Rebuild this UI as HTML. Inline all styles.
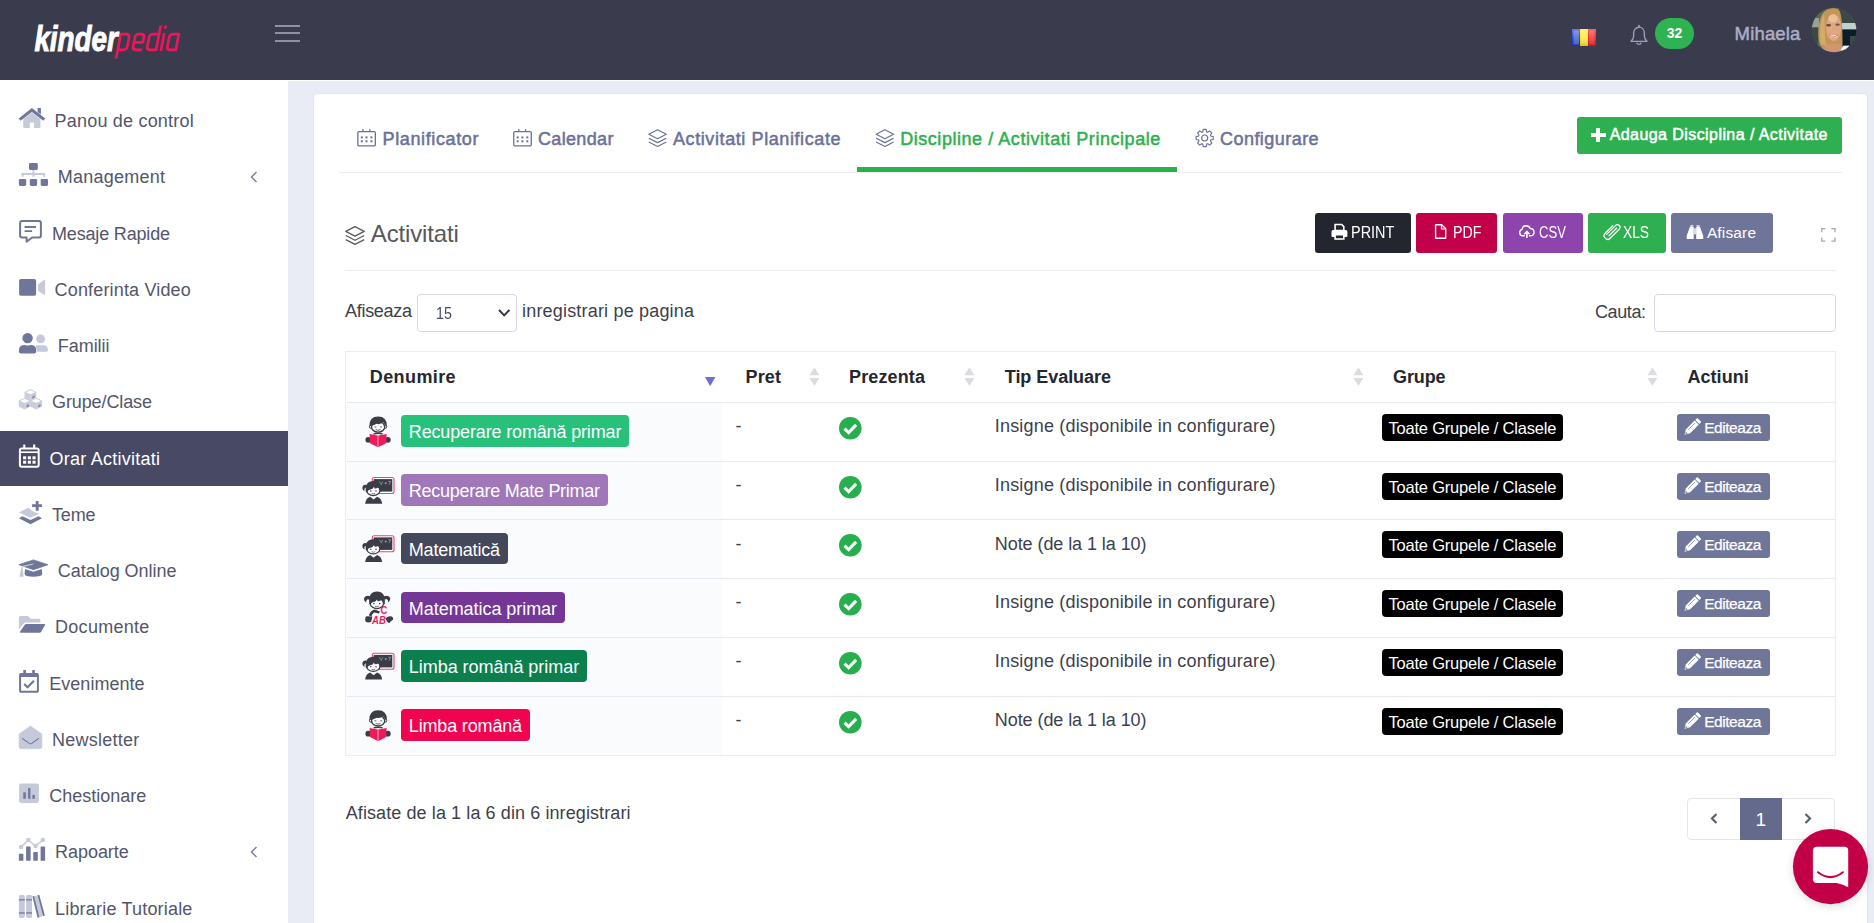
<!DOCTYPE html>
<html lang="ro">
<head>
<meta charset="utf-8">
<title>Kinderpedia - Orar Activitati</title>
<style>
*{box-sizing:border-box;margin:0;padding:0}
html,body{width:1874px;height:923px;overflow:hidden}
body{position:relative;background:#e9ecf5;font-family:"Liberation Sans",sans-serif;color:#3f4254;font-size:18px}
.abs{position:absolute}
.t{position:absolute;white-space:pre;line-height:1}
svg{position:absolute;overflow:visible}
</style>
</head>
<body>
<div class="abs" style="left:0px;top:0px;width:1874px;height:80px;background:#3a3c4e;border-radius:0px;"></div>
<svg style="left:0;top:0" width="200" height="80" viewBox="0 0 200 80"><g transform="translate(0 50.9) skewX(-10.8)"><path d="M117.6 7.6 V-17.8 M117.6 -16.7 H123.3 Q126.5 -16.7 126.5 -13.5 V-4.300000000000001 Q126.5 -1.1 123.3 -1.1 H117.6 M132.3 -8.6 H141.3 V-13.5 Q141.3 -16.7 138.10000000000002 -16.7 H135.5 Q132.3 -16.7 132.3 -13.5 V-4.300000000000001 Q132.3 -1.1 135.5 -1.1 H141.9 M155.9 0 V-25.4 M155.9 -16.7 H149.7 Q146.5 -16.7 146.5 -13.5 V-4.300000000000001 Q146.5 -1.1 149.7 -1.1 H155.9 M160.9 0 V-17.8 M160.9 -22.2 V-25.4 M175.6 0 V-17.8 M175.6 -16.7 H169.79999999999998 Q166.6 -16.7 166.6 -13.5 V-4.300000000000001 Q166.6 -1.1 169.79999999999998 -1.1 H175.6" fill="none" stroke="#ee1659" stroke-width="2.7" stroke-linejoin="round"/></g><text x="34.4" y="50.8" font-family="Liberation Sans,sans-serif" font-weight="bold" font-style="italic" font-size="35" fill="#fff" stroke="#fff" stroke-width="1.0" textLength="83.5" lengthAdjust="spacingAndGlyphs">kinder</text></svg>
<div class="abs" style="left:275px;top:25.1px;width:25px;height:2.1px;background:#8e92a3;border-radius:0px;"></div>
<div class="abs" style="left:275px;top:32.4px;width:25px;height:2.1px;background:#8e92a3;border-radius:0px;"></div>
<div class="abs" style="left:275px;top:39.8px;width:25px;height:2.1px;background:#8e92a3;border-radius:0px;"></div>
<svg style="left:1572px;top:28.8px" width="24" height="17" viewBox="0 0 24 17" ><defs><linearGradient id="fg" x1="0" y1="0" x2="0" y2="1"><stop offset="0" stop-color="#fff" stop-opacity=".35"/><stop offset=".5" stop-color="#fff" stop-opacity=".12"/><stop offset="1" stop-color="#000" stop-opacity=".12"/></linearGradient></defs><rect x="0" y="0" width="8" height="17" fill="#1a34c4"/><rect x="8" y="0" width="8" height="17" fill="#fbe316"/><rect x="16" y="0" width="8" height="17" fill="#e8141c"/><rect x="1.5" y="1.5" width="5.5" height="14" fill="#5d7fe0" opacity=".75"/><rect x="9" y="1.5" width="6" height="14" fill="#fff45c" opacity=".6"/><rect x="17" y="1.5" width="5.5" height="14" fill="#ff5a5a" opacity=".55"/><rect x="0" y="0" width="24" height="17" fill="url(#fg)"/></svg>
<svg style="left:1629.5px;top:24.6px" width="18" height="21" viewBox="0 0 18 21" ><path d="M9 2.2 C5.6 2.2 3.6 5 3.6 8.6 V11.6 C3.6 13.8 2.2 15 1 16.4 H17 C15.8 15 14.4 13.8 14.4 11.6 V8.6 C14.4 5 12.4 2.2 9 2.2 Z" fill="none" stroke="#9c9fb8" stroke-width="1.35" stroke-linejoin="round"/><path d="M9 0.6 V2.2" stroke="#9c9fb8" stroke-width="1.6" stroke-linecap="round"/><path d="M6.7 17.6 A2.4 2.4 0 0 0 11.3 17.6" fill="none" stroke="#9c9fb8" stroke-width="1.35"/></svg>
<div class="abs" style="left:1655px;top:18px;width:39px;height:31px;background:#2fb352;border-radius:15.5px;"></div>
<div class="t" style="left:1666.7px;top:25.9px;font-size:14px;font-weight:bold;letter-spacing:0.022px;color:#fff;">32</div>
<div class="t" style="left:1734.6px;top:24.5px;font-size:18.5px;-webkit-text-stroke:0.5px;letter-spacing:0.167px;color:#abaec6;">Mihaela</div>
<svg style="left:1804px;top:0px" width="60" height="60" viewBox="0 0 60 60" ><defs><clipPath id="avc"><circle cx="30.05" cy="29.95" r="22.3"/></clipPath><filter id="avb" x="-20%" y="-20%" width="140%" height="140%"><feGaussianBlur stdDeviation="0.65"/></filter></defs><g clip-path="url(#avc)"><g filter="url(#avb)"><rect x="0" y="0" width="60" height="60" fill="#5d665c"/><rect x="5" y="18" width="10" height="9" fill="#9aa392"/><rect x="5" y="28" width="9" height="16" fill="#3a4a46"/><rect x="35" y="5" width="25" height="19" fill="#3c4a44"/><rect x="38" y="23" width="20" height="6.5" fill="#bcd3cd"/><rect x="38" y="29.5" width="20" height="18" fill="#0d1c2c"/><rect x="46" y="36" width="10" height="12" fill="#3b4a47"/><path d="M16 45 C13 36 14 20 19 13 C23 8 31 7 35 10 C38 14 38.5 30 38.5 46 L34 50 L20 50 Z" fill="#c39556"/><path d="M17 44 C15 34 16 22 20 14 C21 22 20.5 36 22 46 Z" fill="#d3ab6c"/><ellipse cx="29.6" cy="27.5" rx="7.6" ry="13.5" fill="#e0a67f"/><ellipse cx="29" cy="18.5" rx="4.6" ry="4" fill="#efc098"/><path d="M22 44 L37 44 L40 54 L20 54 Z" fill="#cf9670"/><ellipse cx="24.6" cy="25.2" rx="2.4" ry="1.3" fill="#5b4a44"/><ellipse cx="33.6" cy="24.6" rx="2.2" ry="1.2" fill="#5e5a58"/><ellipse cx="29.6" cy="36.4" rx="3.6" ry="1.4" fill="#f4e6e0"/><path d="M25.5 35 Q29.5 39.5 33.8 34.6" fill="none" stroke="#c9766a" stroke-width="1"/><path d="M36.5 50.5 L39 45.8 L45.5 45.5 L42 51 Z" fill="#f4f4f6"/></g></g></svg>
<div class="abs" style="left:0px;top:80px;width:288px;height:843px;background:#fff;border-radius:0px;"></div>
<div class="abs" style="left:0px;top:431px;width:288px;height:55px;background:#474965;border-radius:0px;"></div>
<div class="t" style="left:54.6px;top:112.0px;font-size:18px;letter-spacing:0.199px;color:#53566b;">Panou de control</div>
<div class="t" style="left:57.8px;top:168.2px;font-size:18px;letter-spacing:0.236px;color:#53566b;">Management</div>
<div class="t" style="left:52.0px;top:225.0px;font-size:18px;letter-spacing:-0.173px;color:#53566b;">Mesaje Rapide</div>
<div class="t" style="left:54.6px;top:280.9px;font-size:18px;letter-spacing:0.162px;color:#53566b;">Conferinta Video</div>
<div class="t" style="left:57.8px;top:337.1px;font-size:18px;letter-spacing:-0.050px;color:#53566b;">Familii</div>
<div class="t" style="left:52.0px;top:393.3px;font-size:18px;letter-spacing:-0.106px;color:#53566b;">Grupe/Clase</div>
<div class="t" style="left:49.4px;top:449.8px;font-size:18px;letter-spacing:0.255px;color:#fff;">Orar Activitati</div>
<div class="t" style="left:52.0px;top:505.9px;font-size:18px;letter-spacing:-0.172px;color:#53566b;">Teme</div>
<div class="t" style="left:57.8px;top:562.1px;font-size:18px;letter-spacing:-0.029px;color:#53566b;">Catalog Online</div>
<div class="t" style="left:55.0px;top:618.3px;font-size:18px;letter-spacing:0.292px;color:#53566b;">Documente</div>
<div class="t" style="left:49.3px;top:674.8px;font-size:18px;letter-spacing:0.015px;color:#53566b;">Evenimente</div>
<div class="t" style="left:52.0px;top:730.9px;font-size:18px;letter-spacing:0.252px;color:#53566b;">Newsletter</div>
<div class="t" style="left:49.3px;top:787.1px;font-size:18px;letter-spacing:-0.006px;color:#53566b;">Chestionare</div>
<div class="t" style="left:55.0px;top:843.3px;font-size:18px;letter-spacing:-0.037px;color:#53566b;">Rapoarte</div>
<div class="t" style="left:55.0px;top:899.8px;font-size:18px;letter-spacing:0.195px;color:#53566b;">Librarie Tutoriale</div>
<svg style="left:250px;top:170.5px" width="8" height="12" viewBox="0 0 8 12" ><path d="M6.5 1 L1.5 6 L6.5 11" fill="none" stroke="#7a7e98" stroke-width="1.4"/></svg>
<svg style="left:250px;top:845.5px" width="8" height="12" viewBox="0 0 8 12" ><path d="M6.5 1 L1.5 6 L6.5 11" fill="none" stroke="#7a7e98" stroke-width="1.4"/></svg>
<svg style="left:0;top:0" width="288" height="923" viewBox="0 0 288 923"><path d="M23.3 119 L31.9 112.6 L40.4 119 V128 H34.1 V122.4 H29.8 V128 H23.3 Z" fill="#c6c9d9"/><path d="M37.6 108.1 H40.9 V114.6 L37.6 112 Z" fill="#6f7699"/><path d="M19.6 119.6 L31.9 110 L44.3 119.6" fill="none" stroke="#6f7699" stroke-width="3" stroke-linejoin="miter"/><path d="M21.6 176.7 V173.1 H45.1 V176.7 H43.1 V175 H34.4 V176.7 H32.4 V175 H23.6 V176.7 Z M32.4 169.8 H34.4 V173.1 H32.4 Z" fill="#c6c9d9"/><rect x="29" y="162.9" width="8.8" height="7" rx="1.3" fill="#6f7699"/><rect x="18.9" y="178.9" width="7.3" height="7" rx="1.3" fill="#6f7699"/><rect x="29.8" y="178.9" width="7.3" height="7" rx="1.3" fill="#6f7699"/><rect x="40.7" y="178.9" width="7.3" height="7" rx="1.3" fill="#6f7699"/><path d="M22.1 221 H38.9 Q40.9 221 40.9 223 V235.5 Q40.9 237.5 38.9 237.5 H32.2 L26.6 241.7 V237.5 H22.1 Q20.1 237.5 20.1 235.5 V223 Q20.1 221 22.1 221 Z" fill="none" stroke="#6f7699" stroke-width="2" stroke-linejoin="round"/><path d="M24.6 227 H36 M24.6 231.2 H32.1" stroke="#6f7699" stroke-width="1.8"/><rect x="19.1" y="278.9" width="17" height="16.9" rx="1.8" fill="#6f7699"/><path d="M38.1 284.4 L44 279.9 Q45.1 279.4 45.1 280.6 V294 Q45.1 295.2 44 294.7 L38.1 290.8 Z" fill="#c6c9d9"/><circle cx="40.6" cy="338.9" r="4.4" fill="#c6c9d9"/><path d="M35.5 345.3 H43.3 Q47.9 345.3 47.9 349.6 V350.3 Q47.9 351.8 46.4 351.8 H37.5 Z" fill="#c6c9d9"/><circle cx="27.6" cy="338.1" r="5.2" fill="#6f7699"/><path d="M18.9 351.6 V350.4 Q18.9 344.9 24.4 344.9 H24.9 Q27.6 346.1 30.3 344.9 H30.8 Q36.3 344.9 36.3 350.4 V351.6 Q36.3 353.4 34.5 353.4 H20.7 Q18.9 353.4 18.9 351.6 Z" fill="#6f7699"/><path d="M30.4 389 L36.3 391.9 V397.8 L30.4 400.7 L24.5 397.8 V391.9 Z" fill="#c9ccda"/><path d="M30.4 390 L35.0 392.2 L30.4 394.2 L25.8 392.2 Z" fill="#fff"/><path d="M32.4 396.5 L34.6 395.3 V397.5 L32.4 398.7 Z" fill="#7f86a8"/><path d="M30.4 394.8 V400.7" stroke="#d9dbe6" stroke-width=".5"/><path d="M24.7 397.7 L30.6 400.59999999999997 V406.5 L24.7 409.4 L18.799999999999997 406.5 V400.59999999999997 Z" fill="#c9ccda"/><path d="M24.7 398.7 L29.3 400.9 L24.7 402.9 L20.099999999999998 400.9 Z" fill="#fff"/><path d="M26.7 405.2 L28.9 404.0 V406.2 L26.7 407.4 Z" fill="#7f86a8"/><path d="M24.7 403.5 V409.4" stroke="#d9dbe6" stroke-width=".5"/><path d="M36.2 397.7 L42.1 400.59999999999997 V406.5 L36.2 409.4 L30.300000000000004 406.5 V400.59999999999997 Z" fill="#c9ccda"/><path d="M36.2 398.7 L40.800000000000004 400.9 L36.2 402.9 L31.600000000000005 400.9 Z" fill="#fff"/><path d="M38.2 405.2 L40.400000000000006 404.0 V406.2 L38.2 407.4 Z" fill="#7f86a8"/><path d="M36.2 403.5 V409.4" stroke="#d9dbe6" stroke-width=".5"/><rect x="19.9" y="448.5" width="18.8" height="18.3" rx="1.8" fill="none" stroke="#fff" stroke-width="2"/><path d="M24.3 444.6 V448 M34.2 444.6 V448" stroke="#fff" stroke-width="2.1"/><path d="M20 452.2 H38.6" stroke="#fff" stroke-width="1.7"/><rect x="23.1" y="456.3" width="3.1" height="3" fill="#fff"/><rect x="23.1" y="460.7" width="3.1" height="3" fill="#fff"/><rect x="27.8" y="456.3" width="3.1" height="3" fill="#fff"/><rect x="27.8" y="460.7" width="3.1" height="3" fill="#fff"/><rect x="32.5" y="456.3" width="3.1" height="3" fill="#fff"/><rect x="32.5" y="460.7" width="3.1" height="3" fill="#fff"/><path d="M18.9 512.6 L28.9 507.4 Q30.5 511.5 39.3 513.6 L30.5 517.8 Z" fill="#c6c9d9"/><path d="M18.9 518.2 L22.4 516.2 L30.5 520 L38.6 516.2 L42 518.2 L30.5 524.2 Z" fill="#6f7699"/><path d="M32.1 505.65 H42 M37.15 500.9 V510.7" stroke="#6f7699" stroke-width="2.9"/><path d="M18.9 564.7 L33.4 559.9 L48 564.7 L33.4 569.7 Z" fill="#6f7699" stroke="#6f7699" stroke-width=".8" stroke-linejoin="round"/><path d="M25 569 L33.4 571.8 L41.8 569 L42.2 574 Q42 575.4 40 576 Q33.4 577.6 26.8 576 Q24.8 575.4 24.6 574 Z" fill="#6f7699"/><path d="M33.4 564 L21.8 566.6" stroke="#c6c9d9" stroke-width="1.1"/><path d="M21.6 567 L22.6 567 L23.6 576.8 H19.4 Z" fill="#c6c9d9"/><path d="M18.9 617.5 Q18.9 616 20.4 616 H28 L30.6 618.8 H38.9 Q40.4 618.8 40.4 620.3 V622.6 H25.6 Q24.3 622.6 23.6 623.8 L18.9 629.6 Z" fill="#c6c9d9"/><path d="M26.4 624 H44.1 Q45.6 624 44.9 625.3 L41 632 Q40.5 632.8 39.6 632.8 H20.9 Q19.4 632.8 20.1 631.5 L24.6 625 Q25.3 624 26.4 624 Z" fill="#6f7699"/><rect x="20.1" y="674" width="17.8" height="17.8" rx="1.6" fill="none" stroke="#6f7699" stroke-width="2"/><rect x="19.6" y="673.4" width="18.8" height="3.6" fill="#6f7699"/><path d="M24.6 670 V674 M33.5 670 V674" stroke="#6f7699" stroke-width="2.6"/><path d="M24.2 684 L27.6 687.2 L33.9 680.8" fill="none" stroke="#6f7699" stroke-width="2.2"/><path d="M30.5 725.9 L41.9 734 V746.8 Q41.9 748.8 39.9 748.8 H21.1 Q19.1 748.8 19.1 746.8 V734 Z" fill="#c6c9d9" stroke="#c6c9d9" stroke-width=".6" stroke-linejoin="round"/><path d="M22 738.3 L29.6 743.6 Q30.5 744.2 31.4 743.6 L38.9 738.3" fill="none" stroke="#5f6791" stroke-width="1"/><rect x="19.1" y="783.5" width="19.8" height="19.5" rx="2.2" fill="#c6c9d9"/><rect x="23.3" y="792.3" width="2.5" height="6.5" fill="#6f7699"/><rect x="28.1" y="788.1" width="2.3" height="10.7" fill="#6f7699"/><rect x="32.4" y="794.9" width="2.4" height="3.9" fill="#6f7699"/><path d="M21.1 847 L28.3 839.9 L35.5 846 L42.8 840" fill="none" stroke="#c6c9d9" stroke-width="1.5"/><circle cx="21.1" cy="847" r="2.2" fill="#c6c9d9"/><circle cx="28.3" cy="839.9" r="2.2" fill="#c6c9d9"/><circle cx="35.5" cy="846" r="2.2" fill="#c6c9d9"/><circle cx="42.8" cy="840" r="2.2" fill="#c6c9d9"/><rect x="18.9" y="853.8" width="4.5" height="7.0" rx=".6" fill="#6f7699"/><rect x="26.1" y="846.4" width="4.5" height="14.4" rx=".6" fill="#6f7699"/><rect x="33.3" y="852.1" width="4.5" height="8.7" rx=".6" fill="#6f7699"/><rect x="40.6" y="846.4" width="4.5" height="14.4" rx=".6" fill="#6f7699"/><rect x="18.9" y="895" width="5.9" height="23" rx="1.4" fill="#c6c9d9"/><rect x="18.9" y="899.1" width="5.9" height="1.4" fill="#6f7699" opacity=".85"/><rect x="18.9" y="912.2" width="5.9" height="1.5" fill="#6f7699" opacity=".85"/><rect x="26.1" y="895" width="5.9" height="23" rx="1.4" fill="#c6c9d9"/><rect x="26.1" y="899.1" width="5.9" height="1.4" fill="#6f7699" opacity=".85"/><rect x="26.1" y="912.2" width="5.9" height="1.5" fill="#6f7699" opacity=".85"/><path d="M33.2 896.4 L38.9 895.1 L44.3 915.8 L38.6 917.6 Z" fill="#c6c9d9"/><path d="M32.4 896.6 L34 896.1 L39.3 917.2 L37.6 917.7 Z" fill="#6f7699"/><path d="M37.6 895.3 L39.3 894.9 L44.9 915.5 L43.2 916 Z" fill="#6f7699"/></svg>
<div class="abs" style="left:288px;top:80px;width:1586px;height:1.2px;background:#fff;border-radius:0px;"></div>
<div class="abs" style="left:314px;top:94px;width:1553px;height:900px;background:#fff;border-radius:4px;box-shadow:0 0 0 1px rgba(222,226,236,.55)"></div>
<div class="t" style="left:382.5px;top:130.1px;font-size:18px;-webkit-text-stroke:0.5px;letter-spacing:0.623px;color:#6a7197;">Planificator</div>
<div class="t" style="left:537.9px;top:130.1px;font-size:18px;-webkit-text-stroke:0.5px;letter-spacing:0.365px;color:#6a7197;">Calendar</div>
<div class="t" style="left:673.0px;top:130.1px;font-size:18px;-webkit-text-stroke:0.5px;letter-spacing:0.592px;color:#6a7197;">Activitati Planificate</div>
<div class="t" style="left:900.2px;top:130.1px;font-size:18px;-webkit-text-stroke:0.5px;letter-spacing:0.545px;color:#2cb04e;">Discipline / Activitati Principale</div>
<div class="t" style="left:1220.0px;top:130.1px;font-size:18px;-webkit-text-stroke:0.5px;letter-spacing:0.454px;color:#6a7197;">Configurare</div>
<div class="abs" style="left:339px;top:172px;width:1503px;height:1px;background:#e9ecf3;border-radius:0px;"></div>
<div class="abs" style="left:857px;top:167px;width:320px;height:5px;background:#2cb04e;border-radius:0px;"></div>
<svg style="left:0;top:0" width="1874" height="200" viewBox="0 0 1874 200"><rect x="357.85" y="131.55" width="17.5" height="14.3" rx="1.2" fill="none" stroke="#6a7197" stroke-width="1.3"/><path d="M362.90000000000003 129.1 V131.6 M369.8 129.1 V131.6" stroke="#6a7197" stroke-width="1.15"/><rect x="360.8" y="136.4" width="2" height="2" fill="#6a7197"/><rect x="360.8" y="140.3" width="2" height="2" fill="#6a7197"/><rect x="365.5" y="136.4" width="2" height="2" fill="#6a7197"/><rect x="365.5" y="140.3" width="2" height="2" fill="#6a7197"/><rect x="370.40000000000003" y="136.4" width="2" height="2" fill="#6a7197"/><rect x="370.40000000000003" y="140.3" width="2" height="2" fill="#6a7197"/><rect x="513.75" y="131.55" width="17.5" height="14.3" rx="1.2" fill="none" stroke="#6a7197" stroke-width="1.3"/><path d="M518.8000000000001 129.1 V131.6 M525.7 129.1 V131.6" stroke="#6a7197" stroke-width="1.15"/><rect x="516.7" y="136.4" width="2" height="2" fill="#6a7197"/><rect x="516.7" y="140.3" width="2" height="2" fill="#6a7197"/><rect x="521.4000000000001" y="136.4" width="2" height="2" fill="#6a7197"/><rect x="521.4000000000001" y="140.3" width="2" height="2" fill="#6a7197"/><rect x="526.3000000000001" y="136.4" width="2" height="2" fill="#6a7197"/><rect x="526.3000000000001" y="140.3" width="2" height="2" fill="#6a7197"/><path d="M657.5500000000001 129.77499999999998 L666.325 134.24999999999997 L657.5500000000001 138.72499999999997 L648.7750000000001 134.24999999999997 Z" fill="none" stroke="#6a7197" stroke-width="1.15" stroke-linejoin="round"/><path d="M648.7750000000001 138.14999999999998 L657.5500000000001 142.62499999999997 L666.325 138.14999999999998" fill="none" stroke="#6a7197" stroke-width="1.15" stroke-linejoin="round"/><path d="M648.7750000000001 142.04999999999998 L657.5500000000001 146.52499999999998 L666.325 142.04999999999998" fill="none" stroke="#6a7197" stroke-width="1.15" stroke-linejoin="round"/><path d="M884.9 129.77499999999998 L893.625 134.24999999999997 L884.9 138.72499999999997 L876.1750000000001 134.24999999999997 Z" fill="none" stroke="#6a7197" stroke-width="1.15" stroke-linejoin="round"/><path d="M876.1750000000001 138.14999999999998 L884.9 142.62499999999997 L893.625 138.14999999999998" fill="none" stroke="#6a7197" stroke-width="1.15" stroke-linejoin="round"/><path d="M876.1750000000001 142.04999999999998 L884.9 146.52499999999998 L893.625 142.04999999999998" fill="none" stroke="#6a7197" stroke-width="1.15" stroke-linejoin="round"/><path d="M1203.23 129.43 L1206.17 129.43 L1206.59 131.89 L1207.69 132.34 L1209.72 130.90 L1211.80 132.98 L1210.36 135.01 L1210.81 136.11 L1213.27 136.53 L1213.27 139.47 L1210.81 139.89 L1210.36 140.99 L1211.80 143.02 L1209.72 145.10 L1207.69 143.66 L1206.59 144.11 L1206.17 146.57 L1203.23 146.57 L1202.81 144.11 L1201.71 143.66 L1199.68 145.10 L1197.60 143.02 L1199.04 140.99 L1198.59 139.89 L1196.13 139.47 L1196.13 136.53 L1198.59 136.11 L1199.04 135.01 L1197.60 132.98 L1199.68 130.90 L1201.71 132.34 L1202.81 131.89 Z" fill="none" stroke="#6a7197" stroke-width="1.15" stroke-linejoin="round"/><circle cx="1204.7" cy="138" r="3" fill="none" stroke="#6a7197" stroke-width="1.15"/></svg>
<div class="abs" style="left:1577px;top:117px;width:265px;height:37px;background:#2eb050;border-radius:3px;"></div>
<div class="t" style="left:1609.7px;top:127.1px;font-size:16px;-webkit-text-stroke:0.5px;letter-spacing:0.426px;color:#fff;">Adauga Disciplina / Activitate</div>
<div class="abs" style="left:1591px;top:133.3px;width:14.6px;height:3.7px;background:#fff;border-radius:0.5px;"></div>
<div class="abs" style="left:1596.45px;top:127.8px;width:3.7px;height:14.6px;background:#fff;border-radius:0.5px;"></div>
<div class="t" style="left:370.8px;top:221.6px;font-size:24px;letter-spacing:-0.151px;color:#585858;">Activitati</div>
<svg style="left:0;top:0" width="1874" height="300" viewBox="0 0 1874 300"><path d="M355.0 226.625 L364.27500000000003 231.375 L355.0 236.125 L345.725 231.375 Z" fill="none" stroke="#5a5a5a" stroke-width="1.25" stroke-linejoin="round"/><path d="M345.725 235.5 L355.0 240.25 L364.27500000000003 235.5" fill="none" stroke="#5a5a5a" stroke-width="1.25" stroke-linejoin="round"/><path d="M345.725 239.625 L355.0 244.375 L364.27500000000003 239.625" fill="none" stroke="#5a5a5a" stroke-width="1.25" stroke-linejoin="round"/></svg>
<div class="abs" style="left:1315px;top:213px;width:96px;height:40px;background:#24262f;border-radius:3px;"></div>
<div class="t" style="left:1351.3px;top:224.8px;font-size:15.6px;transform:scaleX(0.9256);transform-origin:0 0;color:#fff;">PRINT</div>
<div class="abs" style="left:1416px;top:213px;width:81px;height:40px;background:#c2004a;border-radius:3px;"></div>
<div class="t" style="left:1452.7px;top:224.8px;font-size:15.6px;transform:scaleX(0.9074);transform-origin:0 0;color:#fff;">PDF</div>
<div class="abs" style="left:1503px;top:213px;width:80px;height:40px;background:#8e44ad;border-radius:3px;"></div>
<div class="t" style="left:1538.9px;top:224.8px;font-size:15.6px;transform:scaleX(0.8386);transform-origin:0 0;color:#fff;">CSV</div>
<div class="abs" style="left:1588px;top:213px;width:78px;height:40px;background:#2eb050;border-radius:3px;"></div>
<div class="t" style="left:1623.4px;top:224.8px;font-size:15.6px;transform:scaleX(0.8818);transform-origin:0 0;color:#fff;">XLS</div>
<div class="abs" style="left:1671px;top:213px;width:102px;height:40px;background:#6f7598;border-radius:3px;"></div>
<div class="t" style="left:1706.9px;top:225.0px;font-size:15.4px;letter-spacing:0.199px;color:#fff;">Afisare</div>
<svg style="left:0;top:0" width="1874" height="300" viewBox="0 0 1874 300"><path d="M1335.1 224.5 H1341.7 L1343.8 226.6 V230.5 H1335.1 Z" fill="none" stroke="#fff" stroke-width="1.6"/><path d="M1331.5 231.7 Q1331.5 230.1 1333.1 230.1 H1345.8 Q1347.4 230.1 1347.4 231.7 V236.1 Q1347.4 236.9 1346.6 236.9 H1332.3 Q1331.5 236.9 1331.5 236.1 Z" fill="#fff"/><rect x="1335.1" y="234.7" width="8.7" height="4.3" fill="#25272f" stroke="#fff" stroke-width="1.6"/><path d="M1435.6000000000001 224.7 H1441.7 L1445.7 228.7 V238.2 H1435.6000000000001 Z" fill="none" stroke="#fff" stroke-width="1.35" stroke-linejoin="round"/><path d="M1441.5 224.9 V229 H1445.5" fill="none" stroke="#fff" stroke-width="1.2"/><path d="M1524.8 235.8 H1522.9 Q1519.7 235.6 1519.7 232.4 Q1519.8 230 1522.2 229.3 Q1522.4 225.7 1526.2 225.7 Q1529.2 225.8 1530.2 228.5 Q1534 228.6 1534 232.2 Q1534 235.6 1530.8 235.8 H1529" fill="none" stroke="#fff" stroke-width="1.4" stroke-linejoin="round"/><path d="M1526.9 237.9 V232 M1524.3 234.2 L1526.9 231.4 L1529.5 234.2" fill="none" stroke="#fff" stroke-width="1.6"/><g transform="translate(1612.2 231.5) rotate(45)"><path d="M-1.9 6 V-6 Q-1.9 -9.2 0.8 -9.2 Q3.4 -9.2 3.4 -6 V6.6 Q3.4 9.6 -0.2 9.6 Q-3.8 9.6 -3.8 5.8 V-4.2" fill="none" stroke="#fff" stroke-width="1.3" stroke-linecap="round"/><path d="M0.75 -5.4 V5.2" fill="none" stroke="#fff" stroke-width="1.3" stroke-linecap="round"/></g><path d="M1689.9 226.9 H1693.7 V238.9 H1686.7 V235.70000000000002 Z M1700.0 226.9 H1696.2 V238.9 H1703.2 V235.70000000000002 Z" fill="#fff"/><rect x="1690.3" y="225.3" width="3" height="1.4" fill="#fff"/><rect x="1696.6000000000001" y="225.3" width="3" height="1.4" fill="#fff"/><rect x="1693.7" y="228.3" width="2.5" height="6" fill="#fff" opacity=".75"/><path d="M1821.8 232.2 V228.6 H1825.4 M1831.4 228.6 H1835.0000000000002 V232.2 M1835.0000000000002 237.60000000000002 V241.20000000000002 H1831.4 M1825.4 241.20000000000002 H1821.8 V237.60000000000002" fill="none" stroke="#a3a6b4" stroke-width="1.3"/></svg>
<div class="abs" style="left:345px;top:270px;width:1491px;height:1px;background:#eceef4;border-radius:0px;"></div>
<div class="t" style="left:345.0px;top:301.6px;font-size:18px;letter-spacing:-0.292px;color:#3d3f4b;">Afiseaza</div>
<div class="abs" style="left:417px;top:294px;width:100px;height:38px;background:#fff;border-radius:4px;border:1px solid #d5d8e6"></div>
<div class="t" style="left:436.3px;top:305.8px;font-size:16px;transform:scaleX(0.8934);transform-origin:0 0;color:#4a4d60;">15</div>
<svg style="left:498.4px;top:309px" width="12.4" height="8" viewBox="0 0 12.4 8" ><path d="M1 1 L6.2 6.4 L11.4 1" fill="none" stroke="#343642" stroke-width="2"/></svg>
<div class="t" style="left:522.0px;top:301.6px;font-size:18px;letter-spacing:0.185px;color:#3d3f4b;">inregistrari pe pagina</div>
<div class="t" style="left:1595.0px;top:302.8px;font-size:18px;letter-spacing:-0.409px;color:#3d3f4b;">Cauta:</div>
<div class="abs" style="left:1654px;top:294px;width:182px;height:37.5px;background:#fff;border-radius:4px;border:1px solid #d5d8e6"></div>
<div class="abs" style="left:345px;top:351px;width:1491px;height:405px;background:#fff;border-radius:0px;border:1px solid #e9ecf3"></div>
<div class="abs" style="left:346px;top:403px;width:375.5px;height:352px;background:#fafbfd;border-radius:0px;"></div>
<div class="abs" style="left:347px;top:402px;width:1488px;height:1px;background:#e6e9f1;border-radius:0px;"></div>
<div class="abs" style="left:347px;top:461px;width:1488px;height:1px;background:#e6e9f1;border-radius:0px;"></div>
<div class="abs" style="left:347px;top:519px;width:1488px;height:1px;background:#e6e9f1;border-radius:0px;"></div>
<div class="abs" style="left:347px;top:578px;width:1488px;height:1px;background:#e6e9f1;border-radius:0px;"></div>
<div class="abs" style="left:347px;top:637px;width:1488px;height:1px;background:#e6e9f1;border-radius:0px;"></div>
<div class="abs" style="left:347px;top:696px;width:1488px;height:1px;background:#e6e9f1;border-radius:0px;"></div>
<div class="t" style="left:369.8px;top:368.2px;font-size:18px;font-weight:bold;letter-spacing:0.396px;color:#25272f;">Denumire</div>
<div class="t" style="left:745.5px;top:368.2px;font-size:18px;font-weight:bold;letter-spacing:0.161px;color:#25272f;">Pret</div>
<div class="t" style="left:849.0px;top:368.2px;font-size:18px;font-weight:bold;letter-spacing:0.136px;color:#25272f;">Prezenta</div>
<div class="t" style="left:1004.8px;top:368.2px;font-size:18px;font-weight:bold;letter-spacing:-0.047px;color:#25272f;">Tip Evaluare</div>
<div class="t" style="left:1393.0px;top:368.2px;font-size:18px;font-weight:bold;letter-spacing:-0.104px;color:#25272f;">Grupe</div>
<div class="t" style="left:1687.4px;top:368.2px;font-size:18px;font-weight:bold;letter-spacing:0.067px;color:#25272f;">Actiuni</div>
<svg style="left:808.8000000000001px;top:367.3px" width="10.8" height="19.3" viewBox="0 0 11 19" ><path d="M5.5 0 L10.5 8 L0.5 8 Z M5.5 19 L10.5 11 L0.5 11 Z" fill="#dcdce0"/></svg>
<svg style="left:964.1px;top:367.3px" width="10.8" height="19.3" viewBox="0 0 11 19" ><path d="M5.5 0 L10.5 8 L0.5 8 Z M5.5 19 L10.5 11 L0.5 11 Z" fill="#dcdce0"/></svg>
<svg style="left:1352.8px;top:367.3px" width="10.8" height="19.3" viewBox="0 0 11 19" ><path d="M5.5 0 L10.5 8 L0.5 8 Z M5.5 19 L10.5 11 L0.5 11 Z" fill="#dcdce0"/></svg>
<svg style="left:1646.8px;top:367.3px" width="10.8" height="19.3" viewBox="0 0 11 19" ><path d="M5.5 0 L10.5 8 L0.5 8 Z M5.5 19 L10.5 11 L0.5 11 Z" fill="#dcdce0"/></svg>
<svg style="left:705px;top:376.6px" width="10.4" height="9.2" viewBox="0 0 10.4 9.2" ><path d="M0 0 L10.4 0 L5.2 9.2 Z" fill="#6c6fd8"/></svg>
<div class="abs" style="left:401px;top:415px;width:228px;height:31.5px;background:#28c17c;border-radius:4px;"></div>
<div class="t" style="left:408.8px;top:422.6px;font-size:18px;letter-spacing:-0.152px;color:#fff;">Recuperare română primar</div>
<div class="t" style="left:735.5px;top:417.0px;font-size:18px;letter-spacing:-1.500px;color:#3d3f4b;">-</div>
<svg style="left:838.6px;top:416.7px" width="22.6" height="22.6" viewBox="0 0 23 23" ><circle cx="11.5" cy="11.5" r="11.5" fill="#27ae4f"/><path d="M5.6 11.8 L9.8 15.8 L17.4 8" fill="none" stroke="#fff" stroke-width="3.1"/></svg>
<div class="t" style="left:994.8px;top:417.0px;font-size:18px;letter-spacing:0.184px;color:#3d3f4b;">Insigne (disponibile in configurare)</div>
<div class="abs" style="left:1382px;top:414px;width:181px;height:27px;background:#000;border-radius:4px;"></div>
<div class="t" style="left:1388.4px;top:419.6px;font-size:16.5px;letter-spacing:-0.202px;color:#fff;">Toate Grupele / Clasele</div>
<div class="abs" style="left:1677px;top:414px;width:93px;height:27px;background:#70769a;border-radius:3px;"></div>
<div class="t" style="left:1704.2px;top:419.9px;font-size:15.5px;letter-spacing:-0.447px;color:#fff;-webkit-text-stroke:0.25px;">Editeaza</div>
<div class="abs" style="left:401px;top:474px;width:207px;height:31.5px;background:#a077b8;border-radius:4px;"></div>
<div class="t" style="left:408.8px;top:481.6px;font-size:18px;letter-spacing:-0.280px;color:#fff;">Recuperare Mate Primar</div>
<div class="t" style="left:735.5px;top:475.9px;font-size:18px;letter-spacing:-1.500px;color:#3d3f4b;">-</div>
<svg style="left:838.6px;top:475.7px" width="22.6" height="22.6" viewBox="0 0 23 23" ><circle cx="11.5" cy="11.5" r="11.5" fill="#27ae4f"/><path d="M5.6 11.8 L9.8 15.8 L17.4 8" fill="none" stroke="#fff" stroke-width="3.1"/></svg>
<div class="t" style="left:994.8px;top:475.9px;font-size:18px;letter-spacing:0.184px;color:#3d3f4b;">Insigne (disponibile in configurare)</div>
<div class="abs" style="left:1382px;top:473px;width:181px;height:27px;background:#000;border-radius:4px;"></div>
<div class="t" style="left:1388.4px;top:478.6px;font-size:16.5px;letter-spacing:-0.202px;color:#fff;">Toate Grupele / Clasele</div>
<div class="abs" style="left:1677px;top:473px;width:93px;height:27px;background:#70769a;border-radius:3px;"></div>
<div class="t" style="left:1704.2px;top:478.9px;font-size:15.5px;letter-spacing:-0.447px;color:#fff;-webkit-text-stroke:0.25px;">Editeaza</div>
<div class="abs" style="left:401px;top:533px;width:107px;height:31px;background:#45475a;border-radius:4px;"></div>
<div class="t" style="left:408.8px;top:540.6px;font-size:18px;letter-spacing:-0.205px;color:#fff;">Matematică</div>
<div class="t" style="left:735.5px;top:534.6px;font-size:18px;letter-spacing:-1.500px;color:#3d3f4b;">-</div>
<svg style="left:838.6px;top:534.0px" width="22.6" height="22.6" viewBox="0 0 23 23" ><circle cx="11.5" cy="11.5" r="11.5" fill="#27ae4f"/><path d="M5.6 11.8 L9.8 15.8 L17.4 8" fill="none" stroke="#fff" stroke-width="3.1"/></svg>
<div class="t" style="left:994.8px;top:534.6px;font-size:18px;letter-spacing:-0.073px;color:#3d3f4b;">Note (de la 1 la 10)</div>
<div class="abs" style="left:1382px;top:531px;width:181px;height:27px;background:#000;border-radius:4px;"></div>
<div class="t" style="left:1388.4px;top:536.6px;font-size:16.5px;letter-spacing:-0.202px;color:#fff;">Toate Grupele / Clasele</div>
<div class="abs" style="left:1677px;top:531px;width:93px;height:27px;background:#70769a;border-radius:3px;"></div>
<div class="t" style="left:1704.2px;top:536.9px;font-size:15.5px;letter-spacing:-0.447px;color:#fff;-webkit-text-stroke:0.25px;">Editeaza</div>
<div class="abs" style="left:401px;top:592px;width:164px;height:30.7px;background:#753796;border-radius:4px;"></div>
<div class="t" style="left:408.8px;top:599.6px;font-size:18px;letter-spacing:-0.047px;color:#fff;">Matematica primar</div>
<div class="t" style="left:735.5px;top:593.0px;font-size:18px;letter-spacing:-1.500px;color:#3d3f4b;">-</div>
<svg style="left:838.6px;top:592.8px" width="22.6" height="22.6" viewBox="0 0 23 23" ><circle cx="11.5" cy="11.5" r="11.5" fill="#27ae4f"/><path d="M5.6 11.8 L9.8 15.8 L17.4 8" fill="none" stroke="#fff" stroke-width="3.1"/></svg>
<div class="t" style="left:994.8px;top:593.0px;font-size:18px;letter-spacing:0.184px;color:#3d3f4b;">Insigne (disponibile in configurare)</div>
<div class="abs" style="left:1382px;top:590px;width:181px;height:27px;background:#000;border-radius:4px;"></div>
<div class="t" style="left:1388.4px;top:595.6px;font-size:16.5px;letter-spacing:-0.202px;color:#fff;">Toate Grupele / Clasele</div>
<div class="abs" style="left:1677px;top:590px;width:93px;height:27px;background:#70769a;border-radius:3px;"></div>
<div class="t" style="left:1704.2px;top:595.9px;font-size:15.5px;letter-spacing:-0.447px;color:#fff;-webkit-text-stroke:0.25px;">Editeaza</div>
<div class="abs" style="left:401px;top:650px;width:186px;height:31.5px;background:#0b7f4e;border-radius:4px;"></div>
<div class="t" style="left:408.8px;top:657.6px;font-size:18px;letter-spacing:-0.037px;color:#fff;">Limba română primar</div>
<div class="t" style="left:735.5px;top:652.1px;font-size:18px;letter-spacing:-1.500px;color:#3d3f4b;">-</div>
<svg style="left:838.6px;top:651.5px" width="22.6" height="22.6" viewBox="0 0 23 23" ><circle cx="11.5" cy="11.5" r="11.5" fill="#27ae4f"/><path d="M5.6 11.8 L9.8 15.8 L17.4 8" fill="none" stroke="#fff" stroke-width="3.1"/></svg>
<div class="t" style="left:994.8px;top:652.1px;font-size:18px;letter-spacing:0.184px;color:#3d3f4b;">Insigne (disponibile in configurare)</div>
<div class="abs" style="left:1382px;top:649px;width:181px;height:27px;background:#000;border-radius:4px;"></div>
<div class="t" style="left:1388.4px;top:654.6px;font-size:16.5px;letter-spacing:-0.202px;color:#fff;">Toate Grupele / Clasele</div>
<div class="abs" style="left:1677px;top:649px;width:93px;height:27px;background:#70769a;border-radius:3px;"></div>
<div class="t" style="left:1704.2px;top:654.9px;font-size:15.5px;letter-spacing:-0.447px;color:#fff;-webkit-text-stroke:0.25px;">Editeaza</div>
<div class="abs" style="left:401px;top:709px;width:129px;height:31.6px;background:#f0044f;border-radius:4px;"></div>
<div class="t" style="left:408.8px;top:716.6px;font-size:18px;letter-spacing:-0.160px;color:#fff;">Limba română</div>
<div class="t" style="left:735.5px;top:710.5px;font-size:18px;letter-spacing:-1.500px;color:#3d3f4b;">-</div>
<svg style="left:838.6px;top:710.6px" width="22.6" height="22.6" viewBox="0 0 23 23" ><circle cx="11.5" cy="11.5" r="11.5" fill="#27ae4f"/><path d="M5.6 11.8 L9.8 15.8 L17.4 8" fill="none" stroke="#fff" stroke-width="3.1"/></svg>
<div class="t" style="left:994.8px;top:710.5px;font-size:18px;letter-spacing:-0.073px;color:#3d3f4b;">Note (de la 1 la 10)</div>
<div class="abs" style="left:1382px;top:708px;width:181px;height:27px;background:#000;border-radius:4px;"></div>
<div class="t" style="left:1388.4px;top:713.6px;font-size:16.5px;letter-spacing:-0.202px;color:#fff;">Toate Grupele / Clasele</div>
<div class="abs" style="left:1677px;top:708px;width:93px;height:27px;background:#70769a;border-radius:3px;"></div>
<div class="t" style="left:1704.2px;top:713.9px;font-size:15.5px;letter-spacing:-0.447px;color:#fff;-webkit-text-stroke:0.25px;">Editeaza</div>
<svg style="left:0;top:0" width="1874" height="923" viewBox="0 0 1874 923"><g transform="translate(0 0.00)"><circle cx="370.9" cy="426.8" r="1.5" fill="#fff" stroke="#3a3c48" stroke-width="1"/><circle cx="385.3" cy="426.8" r="1.5" fill="#fff" stroke="#3a3c48" stroke-width="1"/><ellipse cx="378.1" cy="426.9" rx="6.6" ry="5.2" fill="#fff" stroke="#3a3c48" stroke-width="1.4"/><path d="M369.4 426 Q369.2 416.4 378.1 416.4 Q387 416.4 386.9 426 Q384.6 425 383 422 Q380 425 376.8 423.8 Q373.6 425.8 369.4 426 Z" fill="#3a3c48"/><path d="M374.4 427 h2 M380.2 427 h2" stroke="#3a3c48" stroke-width=".8"/><path d="M375.6 429.6 Q378.1 431 380.6 429.6" fill="none" stroke="#3a3c48" stroke-width=".8"/><path d="M373.6 434 Q378.1 432.6 382.6 434" fill="none" stroke="#3a3c48" stroke-width="1.4"/><circle cx="368.3" cy="439.8" r="2.9" fill="#3a3c48"/><circle cx="387.8" cy="439.8" r="2.9" fill="#3a3c48"/><path d="M369.6 434 L377.6 435.6 L377.6 447 L370 443.2 Z" fill="#ee1a5c"/><path d="M386.6 434 L378.6 435.6 L378.6 447 L386.2 443.2 Z" fill="#ee1a5c"/><rect x="377.4" y="435.4" width="1.4" height="11.6" fill="#f4527f"/></g><g transform="translate(1692 427.30) rotate(45)"><rect x="-2.9" y="-10.4" width="5.8" height="3" rx=".8" fill="#fff"/><path d="M-2.9 -6.6 H2.9 V5.6 L0 10.6 L-2.9 5.6 Z" fill="#fff"/><path d="M-.9 -5 V4.4" stroke="#70769a" stroke-width=".7"/><path d="M-1.2 7.4 L0 9.4 L1.2 7.4 Z" fill="#70769a"/></g><g transform="translate(0 0.00)"><rect x="372.3" y="477.5" width="21.7" height="16" rx="2" fill="#fff" stroke="#f0436f" stroke-width="1.1"/><rect x="373.6" y="479.1" width="18.7" height="12.5" fill="#3a3c48"/><path d="M379.5 481.5 l1.6 3.4 l1.6 -3.4 M384.6 483.2 h2.2 M385.7 482.1 v2.2 M388.2 481.4 h2.4 l-1.6 3.4" fill="none" stroke="#a9abb6" stroke-width=".7"/><path d="M367.6 485.4 Q363.4 483.6 362.4 487 Q362 490 364.6 491 Q363.8 488.4 365.4 487.8 Q366.6 487.6 367 488.6 Z" fill="#3a3c48"/><ellipse cx="373.3" cy="490.4" rx="6.6" ry="5.2" fill="#fff" stroke="#3a3c48" stroke-width="1.2"/><path d="M365.8 491.6 Q364.4 481 373.8 481 Q382.6 481 382 491 L380.8 492 Q380 488.6 378.6 486.6 Q377.2 489 374.6 488.4 L374 486.8 Q372.8 489.6 370.2 489.4 Q368.2 489.6 367.2 492.4 Z" fill="#3a3c48"/><circle cx="370.8" cy="491" r=".75" fill="#3a3c48"/><circle cx="376" cy="491" r=".75" fill="#3a3c48"/><path d="M371.6 493.4 Q373.4 494.4 375.2 493.4" fill="none" stroke="#3a3c48" stroke-width=".7"/><path d="M365.1 503.8 Q366 498 370.2 496.8 L373.6 499.4 L377 496.8 Q381.4 498 382.2 503.8 Z" fill="#3a3c48"/></g><g transform="translate(1692 486.30) rotate(45)"><rect x="-2.9" y="-10.4" width="5.8" height="3" rx=".8" fill="#fff"/><path d="M-2.9 -6.6 H2.9 V5.6 L0 10.6 L-2.9 5.6 Z" fill="#fff"/><path d="M-.9 -5 V4.4" stroke="#70769a" stroke-width=".7"/><path d="M-1.2 7.4 L0 9.4 L1.2 7.4 Z" fill="#70769a"/></g><g transform="translate(0 58.30)"><rect x="372.3" y="477.5" width="21.7" height="16" rx="2" fill="#fff" stroke="#f0436f" stroke-width="1.1"/><rect x="373.6" y="479.1" width="18.7" height="12.5" fill="#3a3c48"/><path d="M379.5 481.5 l1.6 3.4 l1.6 -3.4 M384.6 483.2 h2.2 M385.7 482.1 v2.2 M388.2 481.4 h2.4 l-1.6 3.4" fill="none" stroke="#a9abb6" stroke-width=".7"/><path d="M367.6 485.4 Q363.4 483.6 362.4 487 Q362 490 364.6 491 Q363.8 488.4 365.4 487.8 Q366.6 487.6 367 488.6 Z" fill="#3a3c48"/><ellipse cx="373.3" cy="490.4" rx="6.6" ry="5.2" fill="#fff" stroke="#3a3c48" stroke-width="1.2"/><path d="M365.8 491.6 Q364.4 481 373.8 481 Q382.6 481 382 491 L380.8 492 Q380 488.6 378.6 486.6 Q377.2 489 374.6 488.4 L374 486.8 Q372.8 489.6 370.2 489.4 Q368.2 489.6 367.2 492.4 Z" fill="#3a3c48"/><circle cx="370.8" cy="491" r=".75" fill="#3a3c48"/><circle cx="376" cy="491" r=".75" fill="#3a3c48"/><path d="M371.6 493.4 Q373.4 494.4 375.2 493.4" fill="none" stroke="#3a3c48" stroke-width=".7"/><path d="M365.1 503.8 Q366 498 370.2 496.8 L373.6 499.4 L377 496.8 Q381.4 498 382.2 503.8 Z" fill="#3a3c48"/></g><g transform="translate(1692 544.30) rotate(45)"><rect x="-2.9" y="-10.4" width="5.8" height="3" rx=".8" fill="#fff"/><path d="M-2.9 -6.6 H2.9 V5.6 L0 10.6 L-2.9 5.6 Z" fill="#fff"/><path d="M-.9 -5 V4.4" stroke="#70769a" stroke-width=".7"/><path d="M-1.2 7.4 L0 9.4 L1.2 7.4 Z" fill="#70769a"/></g><g transform="translate(0 0.00)"><path d="M370.6 596.4 Q366 594.8 364.2 597.8 Q363.4 600.8 366.2 602.6 Q365.8 599.8 367.6 599.2 Q369 599.2 369.6 600.4 Z" fill="#3a3c48"/><path d="M383.6 596.2 Q388.2 594.6 390 597.6 Q390.8 600.6 388 602.4 Q388.4 599.6 386.6 599 Q385.2 599 384.6 600.2 Z" fill="#3a3c48"/><ellipse cx="376.9" cy="603.4" rx="6.6" ry="5.2" fill="#fff" stroke="#3a3c48" stroke-width="1.2"/><path d="M369.2 604 Q368.2 591.6 377 591.6 Q385.8 591.6 384.8 604 L383.8 604.6 Q383.2 601.4 381.6 599.4 Q380 601.8 377.4 601 L377 599.4 Q375.6 602.2 373 602 Q371.2 602.4 370.4 605 Z" fill="#3a3c48"/><circle cx="373.9" cy="603.6" r=".8" fill="#3a3c48"/><circle cx="379.7" cy="603.6" r=".8" fill="#3a3c48"/><path d="M374.9 606.2 Q376.9 607.4 378.9 606.2" fill="none" stroke="#3a3c48" stroke-width=".7"/><path d="M368.8 615.6 Q370.4 610.4 374.8 609.6 L380 611.4 L379 613.4 L374.2 612.6 Q372.2 613.8 371.4 616.2 Z" fill="#3a3c48"/><path d="M365.4 617.6 Q365.8 616.2 367.4 616.3 L372.4 616.6 L371.2 621.8 Q368 623.4 365.8 621.8 Q364.8 619.6 365.4 617.6 Z" fill="#3a3c48"/><path d="M385.4 618.4 Q388.4 615.4 391.8 616.4 Q393.8 617.4 393 619.2 L389.6 622.8 Q388 623.2 387.2 621.8 Z" fill="#3a3c48"/><text x="380.4" y="613.8" font-family="Liberation Sans,sans-serif" font-weight="bold" font-size="11.6" fill="#ee1a5c" textLength="6.8" lengthAdjust="spacingAndGlyphs">C</text><text x="372" y="623.5" font-family="Liberation Sans,sans-serif" font-weight="bold" font-style="italic" font-size="11.2" fill="#ee1a5c" textLength="13.8" lengthAdjust="spacingAndGlyphs">AB</text></g><g transform="translate(1692 603.30) rotate(45)"><rect x="-2.9" y="-10.4" width="5.8" height="3" rx=".8" fill="#fff"/><path d="M-2.9 -6.6 H2.9 V5.6 L0 10.6 L-2.9 5.6 Z" fill="#fff"/><path d="M-.9 -5 V4.4" stroke="#70769a" stroke-width=".7"/><path d="M-1.2 7.4 L0 9.4 L1.2 7.4 Z" fill="#70769a"/></g><g transform="translate(0 175.80)"><rect x="372.3" y="477.5" width="21.7" height="16" rx="2" fill="#fff" stroke="#f0436f" stroke-width="1.1"/><rect x="373.6" y="479.1" width="18.7" height="12.5" fill="#3a3c48"/><path d="M379.5 481.5 l1.6 3.4 l1.6 -3.4 M384.6 483.2 h2.2 M385.7 482.1 v2.2 M388.2 481.4 h2.4 l-1.6 3.4" fill="none" stroke="#a9abb6" stroke-width=".7"/><path d="M367.6 485.4 Q363.4 483.6 362.4 487 Q362 490 364.6 491 Q363.8 488.4 365.4 487.8 Q366.6 487.6 367 488.6 Z" fill="#3a3c48"/><ellipse cx="373.3" cy="490.4" rx="6.6" ry="5.2" fill="#fff" stroke="#3a3c48" stroke-width="1.2"/><path d="M365.8 491.6 Q364.4 481 373.8 481 Q382.6 481 382 491 L380.8 492 Q380 488.6 378.6 486.6 Q377.2 489 374.6 488.4 L374 486.8 Q372.8 489.6 370.2 489.4 Q368.2 489.6 367.2 492.4 Z" fill="#3a3c48"/><circle cx="370.8" cy="491" r=".75" fill="#3a3c48"/><circle cx="376" cy="491" r=".75" fill="#3a3c48"/><path d="M371.6 493.4 Q373.4 494.4 375.2 493.4" fill="none" stroke="#3a3c48" stroke-width=".7"/><path d="M365.1 503.8 Q366 498 370.2 496.8 L373.6 499.4 L377 496.8 Q381.4 498 382.2 503.8 Z" fill="#3a3c48"/></g><g transform="translate(1692 662.30) rotate(45)"><rect x="-2.9" y="-10.4" width="5.8" height="3" rx=".8" fill="#fff"/><path d="M-2.9 -6.6 H2.9 V5.6 L0 10.6 L-2.9 5.6 Z" fill="#fff"/><path d="M-.9 -5 V4.4" stroke="#70769a" stroke-width=".7"/><path d="M-1.2 7.4 L0 9.4 L1.2 7.4 Z" fill="#70769a"/></g><g transform="translate(0 293.90)"><circle cx="370.9" cy="426.8" r="1.5" fill="#fff" stroke="#3a3c48" stroke-width="1"/><circle cx="385.3" cy="426.8" r="1.5" fill="#fff" stroke="#3a3c48" stroke-width="1"/><ellipse cx="378.1" cy="426.9" rx="6.6" ry="5.2" fill="#fff" stroke="#3a3c48" stroke-width="1.4"/><path d="M369.4 426 Q369.2 416.4 378.1 416.4 Q387 416.4 386.9 426 Q384.6 425 383 422 Q380 425 376.8 423.8 Q373.6 425.8 369.4 426 Z" fill="#3a3c48"/><path d="M374.4 427 h2 M380.2 427 h2" stroke="#3a3c48" stroke-width=".8"/><path d="M375.6 429.6 Q378.1 431 380.6 429.6" fill="none" stroke="#3a3c48" stroke-width=".8"/><path d="M373.6 434 Q378.1 432.6 382.6 434" fill="none" stroke="#3a3c48" stroke-width="1.4"/><circle cx="368.3" cy="439.8" r="2.9" fill="#3a3c48"/><circle cx="387.8" cy="439.8" r="2.9" fill="#3a3c48"/><path d="M369.6 434 L377.6 435.6 L377.6 447 L370 443.2 Z" fill="#ee1a5c"/><path d="M386.6 434 L378.6 435.6 L378.6 447 L386.2 443.2 Z" fill="#ee1a5c"/><rect x="377.4" y="435.4" width="1.4" height="11.6" fill="#f4527f"/></g><g transform="translate(1692 721.30) rotate(45)"><rect x="-2.9" y="-10.4" width="5.8" height="3" rx=".8" fill="#fff"/><path d="M-2.9 -6.6 H2.9 V5.6 L0 10.6 L-2.9 5.6 Z" fill="#fff"/><path d="M-.9 -5 V4.4" stroke="#70769a" stroke-width=".7"/><path d="M-1.2 7.4 L0 9.4 L1.2 7.4 Z" fill="#70769a"/></g></svg>
<div class="t" style="left:345.7px;top:804.3px;font-size:18px;letter-spacing:0.096px;color:#3d3f4b;">Afisate de la 1 la 6 din 6 inregistrari</div>
<div class="abs" style="left:1687px;top:798px;width:148px;height:42px;background:#fff;border-radius:4px;border:1px solid #e3e6ee"></div>
<div class="abs" style="left:1740px;top:798px;width:42px;height:42px;background:#646a8c;border-radius:0px;"></div>
<div class="t" style="left:1755.5px;top:809.9px;font-size:19px;letter-spacing:-0.078px;color:#fff;">1</div>
<svg style="left:1709.5px;top:812.5px" width="8" height="11" viewBox="0 0 8 11" ><path d="M6.5 1 L2 5.5 L6.5 10" fill="none" stroke="#5d6070" stroke-width="2.2"/></svg>
<svg style="left:1804px;top:812.5px" width="8" height="11" viewBox="0 0 8 11" ><path d="M1.5 1 L6 5.5 L1.5 10" fill="none" stroke="#5d6070" stroke-width="2.2"/></svg>
<svg style="left:0;top:0" width="1874" height="923" viewBox="0 0 1874 923"><defs><filter id="chs" x="-40%" y="-40%" width="180%" height="180%"><feGaussianBlur stdDeviation="5"/></filter></defs><circle cx="1830.5" cy="868.5" r="37" fill="#000" opacity=".16" filter="url(#chs)"/><circle cx="1830.5" cy="866.6" r="37.6" fill="#c20046"/><path d="M1816.9 846.8 H1844.6 Q1848.2 846.8 1848.2 850.4 V887.2 Q1843 884.4 1836.8 882.9 H1816.9 Q1812.9 882.9 1812.9 878.9 V850.8 Q1812.9 846.8 1816.9 846.8 Z" fill="#fff"/><path d="M1818 872.2 Q1830.4 882 1842.9 872.2" fill="none" stroke="#c20046" stroke-width="2" stroke-linecap="round"/></svg>
</body>
</html>
